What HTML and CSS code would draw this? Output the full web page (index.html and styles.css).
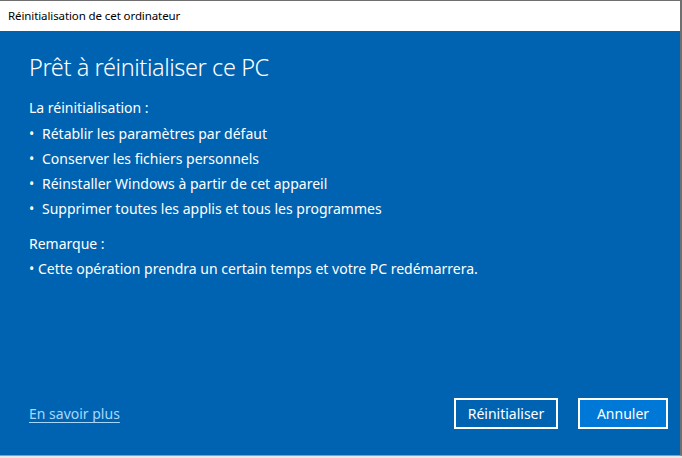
FILE: index.html
```html
<!DOCTYPE html>
<html lang="fr">
<head>
<meta charset="utf-8">
<title>Réinitialisation de cet ordinateur</title>
<link rel="stylesheet" href="styles.css">
</head>
<body>
<div class="window">
  <div class="titlebar">Réinitialisation de cet ordinateur</div>
  <div class="content">
    <div class="main">
      <h1 class="heading">Prêt à réinitialiser ce PC</h1>
      <p class="label">La réinitialisation :</p>
      <ul class="list">
        <li>Rétablir les paramètres par défaut</li>
        <li>Conserver les fichiers personnels</li>
        <li>Réinstaller Windows à partir de cet appareil</li>
        <li>Supprimer toutes les applis et tous les programmes</li>
      </ul>
      <p class="label remark">Remarque :</p>
      <p class="note">• Cette opération prendra un certain temps et votre PC redémarrera.</p>
    </div>
    <div class="footer">
      <a class="link" href="#">En savoir plus</a>
      <div class="buttons">
        <button class="btn">Réinitialiser</button>
        <button class="btn primary">Annuler</button>
      </div>
    </div>
  </div>
</div>
</body>
</html>
```
FILE: styles.css
```css
html, body {
  margin: 0;
  padding: 0;
}
body {
  width: 682px;
  height: 458px;
  background: #e8e8e8;
  font-family: "Noto Sans", "Open Sans", sans-serif;
  overflow: hidden;
}
.window {
  width: 680px;
  height: 454px;
  border-top: 1px solid #6f6f6f;
  border-right: 2px solid #6f6f6f;
  border-bottom: 1px solid #9a9a9a;
  display: flex;
  flex-direction: column;
}
.titlebar {
  height: 30px;
  background: #ffffff;
  color: #000;
  font-size: 11.5px;
  letter-spacing: -0.1px;
  line-height: 30px;
  padding-left: 8px;
  box-sizing: border-box;
}
.content {
  flex: 1;
  background: #0063b1;
  color: #ffffff;
  display: flex;
  flex-direction: column;
  justify-content: space-between;
  padding: 20px 12px 26px 29px;
}
.heading {
  margin: 0;
  font-weight: 300;
  font-size: 23.5px;
  letter-spacing: -0.4px;
  line-height: 32px;
}
.label {
  margin: 12px 0 1px;
  font-size: 14px;
  line-height: 25px;
}
.list {
  list-style: none;
  margin: 0;
  padding: 0;
  font-size: 14px;
  line-height: 25px;
}
.list li {
  position: relative;
  padding-left: 13px;
}
.list li::before {
  content: "•";
  position: absolute;
  left: 0;
}
.remark {
  margin-top: 10px;
  margin-bottom: 0;
}
.note {
  margin: 0;
  font-size: 14px;
  line-height: 25px;
}
.footer {
  display: flex;
  justify-content: space-between;
  align-items: center;
}
.link {
  color: #a6d8ff;
  font-size: 14px;
  text-decoration: underline;
  text-underline-offset: 3px;
}
.buttons {
  display: flex;
  gap: 20px;
}
.btn {
  height: 31px;
  border: 2px solid #ffffff;
  background: #0063b1;
  color: #ffffff;
  font-family: "Noto Sans", "Open Sans", sans-serif;
  font-size: 14px;
  padding: 0;
  width: 104px;
}
.btn.primary {
  background: #0078d7;
  width: 90px;
}
```
